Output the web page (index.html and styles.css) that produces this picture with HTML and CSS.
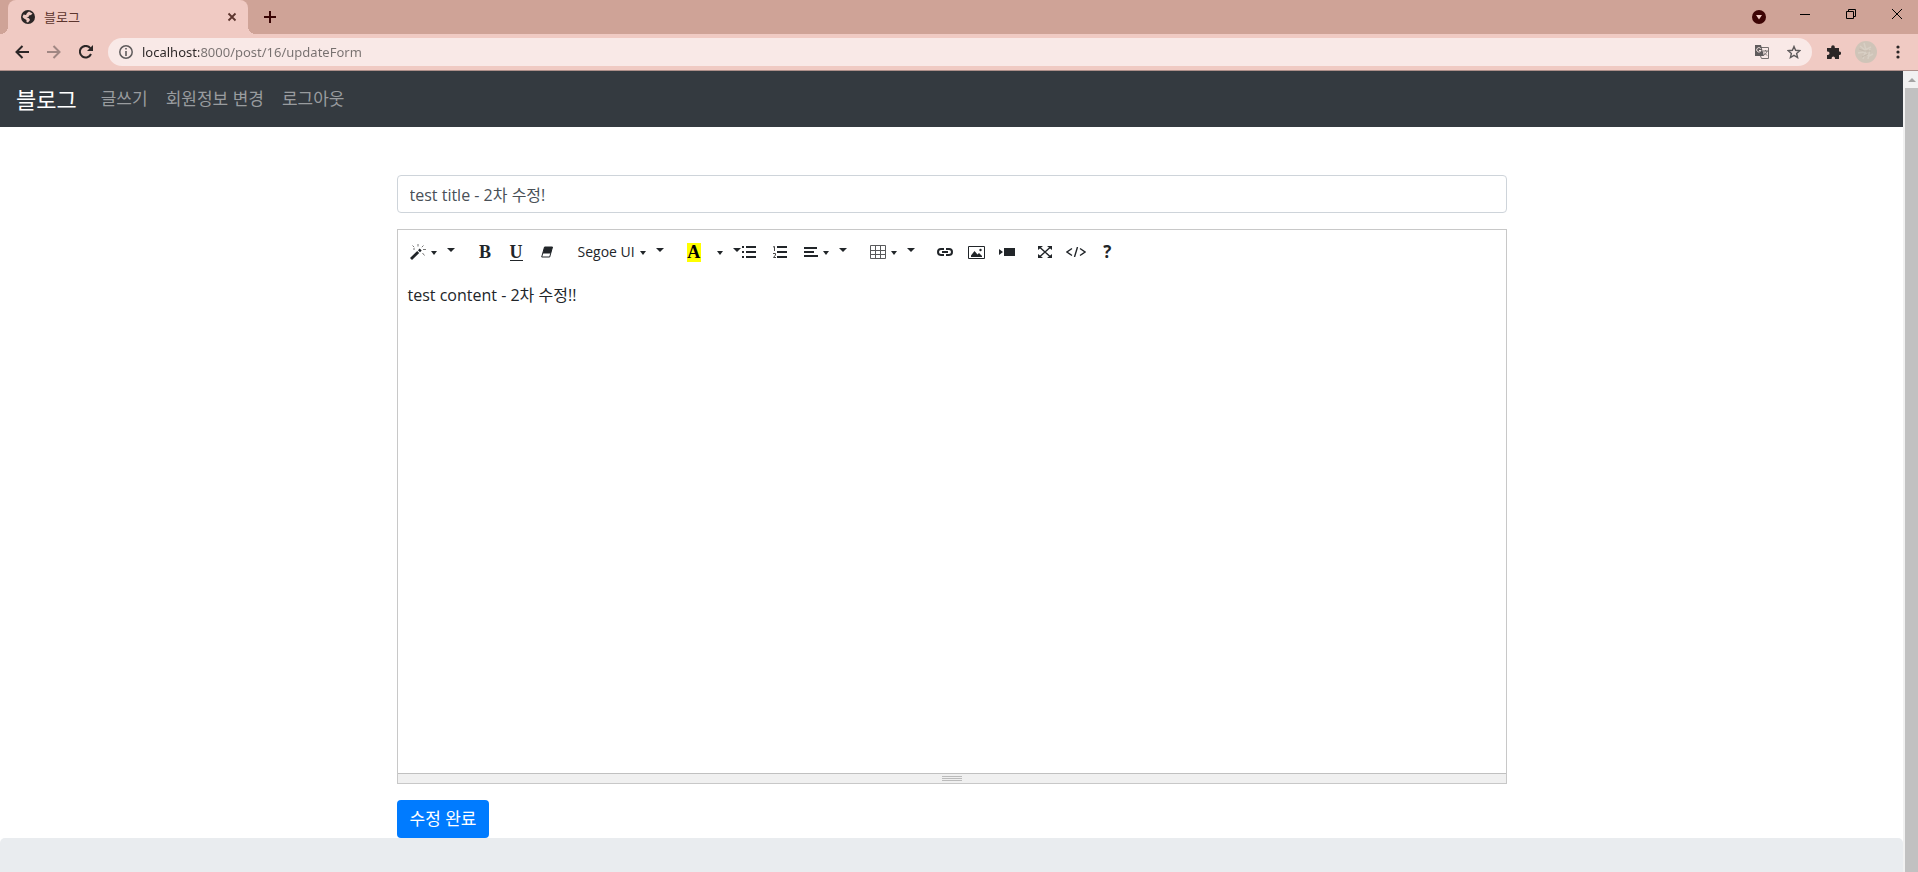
FILE: index.html
```html
<!DOCTYPE html>
<html lang="ko">

<head>
    <meta charset="utf-8">
    <meta name="viewport" content="width=device-width, initial-scale=1.0">
    <title>블로그</title>

    <link rel="stylesheet" href="styles.css">
</head>

<body>

    <!-- browser -->
    <div class="browser">
        <div class="tabs">
            <div class="tab">
                <svg class="favicon" width="14" height="14" viewBox="0 0 14 14">
                    <circle cx="7" cy="7" r="7" fill="#2b2626" />
                    <path d="M8 1.500l3.500 2-1.500 1.500-2 .5-.5 1.500-2 .5 2.500.8 1 1.700-2 2.500-1.500-.5V10L3 8.500 1.500 7l1-2.500L5 5l1-2z" fill="#f0cac3" />
                </svg>
                <span class="tab-title">블로그</span>
                <button class="chrome-btn" aria-label="탭 닫기">
                    <svg width="10" height="10" viewBox="0 0 10 10"><path d="M1.500 1.500l7 7M8.500 1.500l-7 7" stroke="#5c352e" stroke-width="1.800" /></svg>
                </button>
            </div>
            <button class="chrome-btn new-tab" aria-label="새 탭">
                <svg width="12" height="12" viewBox="0 0 12 12"><path d="M6 0v12M0 6h12" stroke="#380404" stroke-width="2" /></svg>
            </button>
            <div class="window-buttons">
                <button class="chrome-btn" aria-label="탭 검색">
                    <svg class="low" width="14" height="14" viewBox="0 0 14 14"><circle cx="7" cy="7" r="7" fill="#3d0505" /><path d="M4 5h6L7 9.500z" fill="#f0cac3" /></svg>
                </button>
                <button class="chrome-btn" aria-label="최소화">
                    <svg width="10" height="10" viewBox="0 0 10 10"><path d="M0 5.500h10" stroke="#000" /></svg>
                </button>
                <button class="chrome-btn" aria-label="이전 크기로">
                    <svg width="10" height="10" viewBox="0 0 10 10"><path d="M.5 2.500h7v7h-7zM2.500 2.500v-2h7v7h-2" fill="none" stroke="#000" /></svg>
                </button>
                <button class="chrome-btn" aria-label="닫기">
                    <svg width="10" height="10" viewBox="0 0 10 10"><path d="M0 0l10 10M10 0L0 10" stroke="#000" /></svg>
                </button>
            </div>
        </div>

        <div class="address-row">
            <button class="chrome-btn" aria-label="뒤로">
                <svg width="14" height="14" viewBox="0 0 14 14"><path d="M14 7H1.500M7.500 1l-6 6 6 6" fill="none" stroke="#2b2626" stroke-width="2" /></svg>
            </button>
            <button class="chrome-btn" aria-label="앞으로">
                <svg width="14" height="14" viewBox="0 0 14 14"><path d="M0 7h12.500M6.500 1l6 6-6 6" fill="none" stroke="#a08783" stroke-width="2" /></svg>
            </button>
            <button class="chrome-btn" aria-label="새로고침">
                <svg width="14" height="14" viewBox="0 0 14 14"><path d="M12 9A5.800 5.800 0 1 1 11.300 3.200" fill="none" stroke="#2b2626" stroke-width="2" /><path d="M14 0v6H8z" fill="#2b2626" /></svg>
            </button>
            <div class="address">
                <svg width="14" height="14" viewBox="0 0 14 14"><circle cx="7" cy="7" r="6.200" fill="none" stroke="#5f5b5c" stroke-width="1.500" /><path d="M7 6v5M7 3v1.600" stroke="#5f5b5c" stroke-width="1.600" /></svg>
                <input type="text" class="url" aria-label="주소" value="localhost:8000/post/16/updateForm">
                <button class="chrome-btn" aria-label="번역">
                    <svg width="14" height="14" viewBox="0 0 14 14"><path d="M5 2.500h8.500v11H6.500L5.500 11" fill="none" stroke="#77706f" /><path d="M0 0h6l3 11H0z" fill="#5f5b5c" /><path d="M5.800 3.700A2.200 2.200 0 1 0 6 5.500H4" fill="none" stroke="#f9e9e7" /><path d="M8 6h5M10.500 5v1M12 6c-.5 2-1.500 3-3 4M9 7.500l3 3" fill="none" stroke="#77706f" /></svg>
                </button>
                <button class="chrome-btn" aria-label="북마크">
                    <svg width="14" height="14" viewBox="0 0 14 14"><path d="M7 1.500l1.600 3.800 4.200.4-3.200 2.700 1 4.100L7 10.300l-3.600 2.200 1-4.100L1.200 5.700l4.200-.4z" fill="none" stroke="#5f5b5c" stroke-width="1.400" /></svg>
                </button>
            </div>
            <button class="chrome-btn extensions" aria-label="확장 프로그램">
                <svg width="14" height="14" viewBox="0 0 14 14"><path d="M0 3h4.200V2a1.800 1.800 0 0 1 3.600 0v1H12v3.500h.4a1.700 1.700 0 0 1 0 3.400H12V14H8v-.8a1.700 1.700 0 0 0-3.400 0v.8H0v-4h.8a1.700 1.700 0 0 0 0-3.400H0z" fill="#2b2626" /></svg>
            </button>
            <button class="avatar" aria-label="프로필">
                <svg width="22" height="22" viewBox="0 0 22 22"><circle cx="11" cy="11" r="11" fill="#cfc4b8" /><path d="M5 5l5 4 6-3M3 12l6-1 5 4 4-2M9 2l2 7-3 9M15 8l-2 10" fill="none" stroke="#d8cfc4" stroke-width="1.500" /><path d="M4 8l5 2 7 0M7 16l6-3" fill="none" stroke="#c4b9ad" /></svg>
            </button>
            <button class="chrome-btn" aria-label="메뉴">
                <svg width="4" height="14" viewBox="0 0 4 14" fill="#2b2626"><circle cx="2" cy="2" r="1.600" /><circle cx="2" cy="7" r="1.600" /><circle cx="2" cy="12" r="1.600" /></svg>
            </button>
        </div>
    </div>

    <div class="window">
        <div class="page">

            <nav class="navbar">
                <a href="#" class="brand">블로그</a>
                <a href="#" class="nav-link">글쓰기</a>
                <a href="#" class="nav-link">회원정보 변경</a>
                <a href="#" class="nav-link">로그아웃</a>
            </nav>

            <main class="container">
                <form>
                    <input type="text" class="title" aria-label="Title" value="test title - 2차 수정!">

                    <div class="editor">
                        <div class="toolbar">
                            <div class="group">
                                <button type="button" class="drop" aria-label="Style">
                                    <svg width="16" height="16" viewBox="0 0 16 16"><path d="M0 14L7.200 7l2 2L2 16zM8 6.200L9.700 4.500l2 2L10 8.200z" fill="#212529" /><path d="M8 0v2.500M2.500 1.500l1.700 1.700M13.500 1.500l-1.700 1.700M13 5.500h3M12.500 9l2 2.500M5 5H3" stroke="#777" /></svg>
                                    <i class="caret"></i><i class="caret big"></i>
                                </button>
                            </div>
                            <div class="group">
                                <button type="button" class="tool serif"><b>B</b></button>
                                <button type="button" class="tool serif"><b class="under">U</b></button>
                                <button type="button" class="tool" aria-label="Remove Font Style">
                                    <svg width="12" height="12" viewBox="0 0 12 12"><path d="M3.500 1h8L8.700 11H.7z" fill="#fff" stroke="#212529" /><path d="M3.500 1h8L9.700 7.500h-8z" fill="#212529" /></svg>
                                </button>
                            </div>
                            <div class="group">
                                <button type="button" class="drop">Segoe UI<i class="caret"></i><i class="caret big"></i></button>
                            </div>
                            <div class="group color">
                                <button type="button" class="drop serif"><b class="mark">A</b></button>
                                <button type="button" class="drop more" aria-label="More Color"><i class="caret"></i><i class="caret big"></i></button>
                            </div>
                            <div class="group">
                                <button type="button" class="tool" aria-label="Unordered list">
                                    <svg width="14" height="12" viewBox="0 0 14 12" fill="#212529"><path d="M0 0h2v2H0zM0 5h2v2H0zM0 10h2v2H0zM4 0h10v2H4zM4 5h10v2H4zM4 10h10v2H4z" /></svg>
                                </button>
                                <button type="button" class="tool" aria-label="Ordered list">
                                    <svg width="14" height="12" viewBox="0 0 14 12"><path d="M4 0h10v2H4zM4 5h10v2H4zM4 10h10v2H4z" fill="#212529" /><path d="M0 1l1.500-.5V5M0 7.500h2.500v1.500L.5 11.500H3" fill="none" stroke="#444" /></svg>
                                </button>
                                <button type="button" class="drop" aria-label="Paragraph">
                                    <svg width="14" height="12" viewBox="0 0 14 12" fill="#212529"><path d="M0 1h13v2H0zM0 5h10v2H0zM0 9h14v2H0z" /></svg>
                                    <i class="caret"></i><i class="caret big"></i>
                                </button>
                            </div>
                            <div class="group">
                                <button type="button" class="drop" aria-label="Table">
                                    <svg width="16" height="14" viewBox="0 0 16 14"><path d="M.5.5h15v13H.5zM5.500 0v14M10.500 0v14M0 5.500h16M0 9.500h16" fill="none" stroke="#58595b" /></svg>
                                    <i class="caret"></i><i class="caret big"></i>
                                </button>
                            </div>
                            <div class="group">
                                <button type="button" class="tool" aria-label="Link">
                                    <svg width="16" height="8" viewBox="0 0 16 8"><path d="M7 1H4a3 3 0 0 0 0 6h3M9 1h3a3 3 0 0 1 0 6H9M5 4h6" fill="none" stroke="#212529" stroke-width="2" /></svg>
                                </button>
                                <button type="button" class="tool" aria-label="Picture">
                                    <svg width="17" height="13" viewBox="0 0 17 13"><path d="M.5.5h16v12H.5z" fill="none" stroke="#212529" /><path d="M3 11V9.500L6.500 5l3 3.500L11 7l3 3v1z" fill="#212529" /><circle cx="12.500" cy="4" r="1.200" fill="#212529" /></svg>
                                </button>
                                <button type="button" class="tool" aria-label="Video">
                                    <svg width="16" height="8" viewBox="0 0 16 8" fill="#212529"><path d="M0 1l4 3-4 3zM5 0h11v8H5z" /></svg>
                                </button>
                            </div>
                            <div class="group">
                                <button type="button" class="tool" aria-label="Full Screen">
                                    <svg width="14" height="12" viewBox="0 0 14 12"><path d="M2 1.500l10 9M12 1.500l-10 9" stroke="#212529" stroke-width="1.400" /><path d="M0 0h5L0 4zM14 0v4L9 0zM0 12V8l5 4zM14 12H9l5-4z" fill="#212529" /></svg>
                                </button>
                                <button type="button" class="tool" aria-label="Code View">
                                    <svg width="20" height="10" viewBox="0 0 20 10"><path d="M6 1.500L1 5l5 3.500M14 1.500L19 5l-5 3.500M11.500 0l-3 10" fill="none" stroke="#212529" stroke-width="1.400" /></svg>
                                </button>
                                <button type="button" class="tool help"><b>?</b></button>
                            </div>
                        </div>
                        <textarea class="content" aria-label="Content">test content - 2차 수정!!</textarea>
                        <div class="statusbar"><i></i><i></i><i></i></div>
                    </div>

                    <button type="button" class="submit">수정 완료</button>
                </form>
            </main>

            <footer class="jumbotron"></footer>
        </div>

        <div class="scrollbar">
            <i class="scroll-up"></i>
            <div class="thumb"></div>
        </div>
    </div>

</body>

</html>
```
FILE: styles.css
```css
* {
    box-sizing: border-box;
}

body {
    margin: 0;
    height: 100vh;
    display: flex;
    flex-direction: column;
    overflow: hidden;
    background-color: white;
    color: #212529;
    font-family: "Open Sans", "Noto Sans CJK KR", sans-serif;
    font-size: 16px;
    line-height: 24px;
}

button,
input,
textarea {
    margin: 0;
    padding: 0;
    border: none;
    background: none;
    color: inherit;
    font: inherit;
    outline: none;
}

button {
    cursor: pointer;
}

svg {
    display: block;
    flex: none;
}

a {
    text-decoration: none;
}

/* browser */

.browser {
    flex: none;
    background-color: #f0cac3;
    border-bottom: 1px solid #ad8f8a;
}

.chrome-btn {
    display: flex;
    align-items: center;
    justify-content: center;
    height: 24px;
}

.tabs {
    display: flex;
    align-items: center;
    height: 34px;
    padding-left: 8px;
    background-color: #cfa397;
}

.tab {
    position: relative;
    display: flex;
    align-items: center;
    width: 240px;
    height: 34px;
    padding: 0 11px 0 13px;
    border-radius: 8px 8px 0 0;
    background-color: #f0cac3;
}

/* the curved feet of the tab */
.tab::before,
.tab::after {
    content: "";
    position: absolute;
    bottom: 0;
    width: 8px;
    height: 8px;
}

.tab::before {
    left: -8px;
    background: radial-gradient(circle at 0 0, transparent 8px, #f0cac3 8px);
}

.tab::after {
    right: -8px;
    background: radial-gradient(circle at 100% 0, transparent 8px, #f0cac3 8px);
}

.tab-title {
    flex: 1;
    margin-left: 9px;
    color: #5c352e;
    font-size: 13px;
}

.new-tab {
    margin-left: 16px;
}

.window-buttons {
    display: flex;
    margin: 0 -2px 0 auto;
    padding-bottom: 6px;
}

.window-buttons .chrome-btn {
    width: 46px;
}

.window-buttons .low {
    margin-top: 5px;
}

.address-row {
    display: flex;
    align-items: center;
    gap: 18px;
    height: 36px;
    padding: 0 18px 0 15px;
}

.address {
    flex: 1;
    display: flex;
    align-items: center;
    gap: 18px;
    height: 28px;
    margin-left: -3px;
    padding: 0 11px;
    border-radius: 14px;
    background-color: #f9e9e7;
}

.url {
    flex: 1;
    min-width: 0;
    margin-left: -9px;
    background: linear-gradient(to right, #2b2626 57px, #77706f 57px);
    background-clip: text;
    color: transparent;
    font-family: "Noto Sans", sans-serif;
    font-size: 13px;
}

.extensions {
    margin-left: -3px;
}

.avatar {
    margin: 0 1px 0 -4px;
}

/* page */

.window {
    flex: 1;
    display: flex;
    min-height: 0;
}

.page {
    flex: 1;
    overflow: hidden;
}

.navbar {
    display: flex;
    align-items: center;
    gap: 18px;
    height: 56px;
    padding: 0 16px;
    background-color: #343a40;
}

.brand {
    margin-right: 6px;
    color: white;
    font-size: 22px;
}

.nav-link {
    color: #999c9f;
    font-size: 17px;
}

.container {
    max-width: 1140px;
    margin: 48px auto 0;
    padding: 0 15px;
}

.title {
    display: block;
    width: 100%;
    height: 38px;
    margin-bottom: 16px;
    padding: 0 12px;
    border: 1px solid #ced4da;
    border-radius: 4px;
    color: #495057;
}

.editor {
    margin-bottom: 16px;
    border: 1px solid #c8c8c8;
}

.toolbar {
    display: flex;
    flex-wrap: wrap;
    gap: 7px;
    padding: 8px 4px;
}

.group {
    display: flex;
}

.tool,
.drop {
    display: flex;
    align-items: center;
    justify-content: center;
    height: 28px;
    font-size: 14px;
}

.tool {
    width: 31px;
}

.drop {
    padding: 0 8px;
}

.serif {
    font-family: "Liberation Serif", serif;
    font-size: 18px;
}

.under {
    line-height: 16px;
    border-bottom: 1px solid #212529;
}

.mark {
    width: 14px;
    line-height: 19px;
    background-color: yellow;
    color: black;
}

.help {
    font-size: 17px;
}

.caret {
    margin: 2px 0 0 5px;
    border-top: 4px solid #212529;
    border-left: 3px solid transparent;
    border-right: 3px solid transparent;
}

.caret.big {
    margin: 0 0 5px 10px;
    border-left-width: 4px;
    border-right-width: 4px;
}

.color {
    margin-right: -8px;
}

.more {
    padding: 0 0 0 3px;
    margin-right: -6px;
}

.content {
    display: block;
    width: 100%;
    height: 499px;
    padding: 9px 10px;
    resize: none;
}

.statusbar {
    display: flex;
    flex-direction: column;
    align-items: center;
    gap: 1px;
    height: 10px;
    padding-top: 2px;
    border-top: 1px solid #c0c0c0;
    background-color: #f0f0f0;
}

.statusbar i {
    width: 20px;
    height: 1px;
    background-color: #bbb;
}

.submit {
    display: block;
    height: 38px;
    padding: 0 13px;
    border-radius: 4px;
    background-color: #007bff;
    color: white;
    font-size: 17px;
}

.jumbotron {
    height: 140px;
    border-radius: 5px;
    background-color: #e9ecef;
}

.scrollbar {
    display: flex;
    flex-direction: column;
    width: 15px;
    padding-left: 2px;
    background-color: #f1f1f1;
}

.scroll-up {
    margin: 7px auto 6px;
    border-bottom: 4px solid #a3a3a3;
    border-left: 4px solid transparent;
    border-right: 4px solid transparent;
}

.thumb {
    flex: 1;
    background-color: #c1c1c1;
}
```
